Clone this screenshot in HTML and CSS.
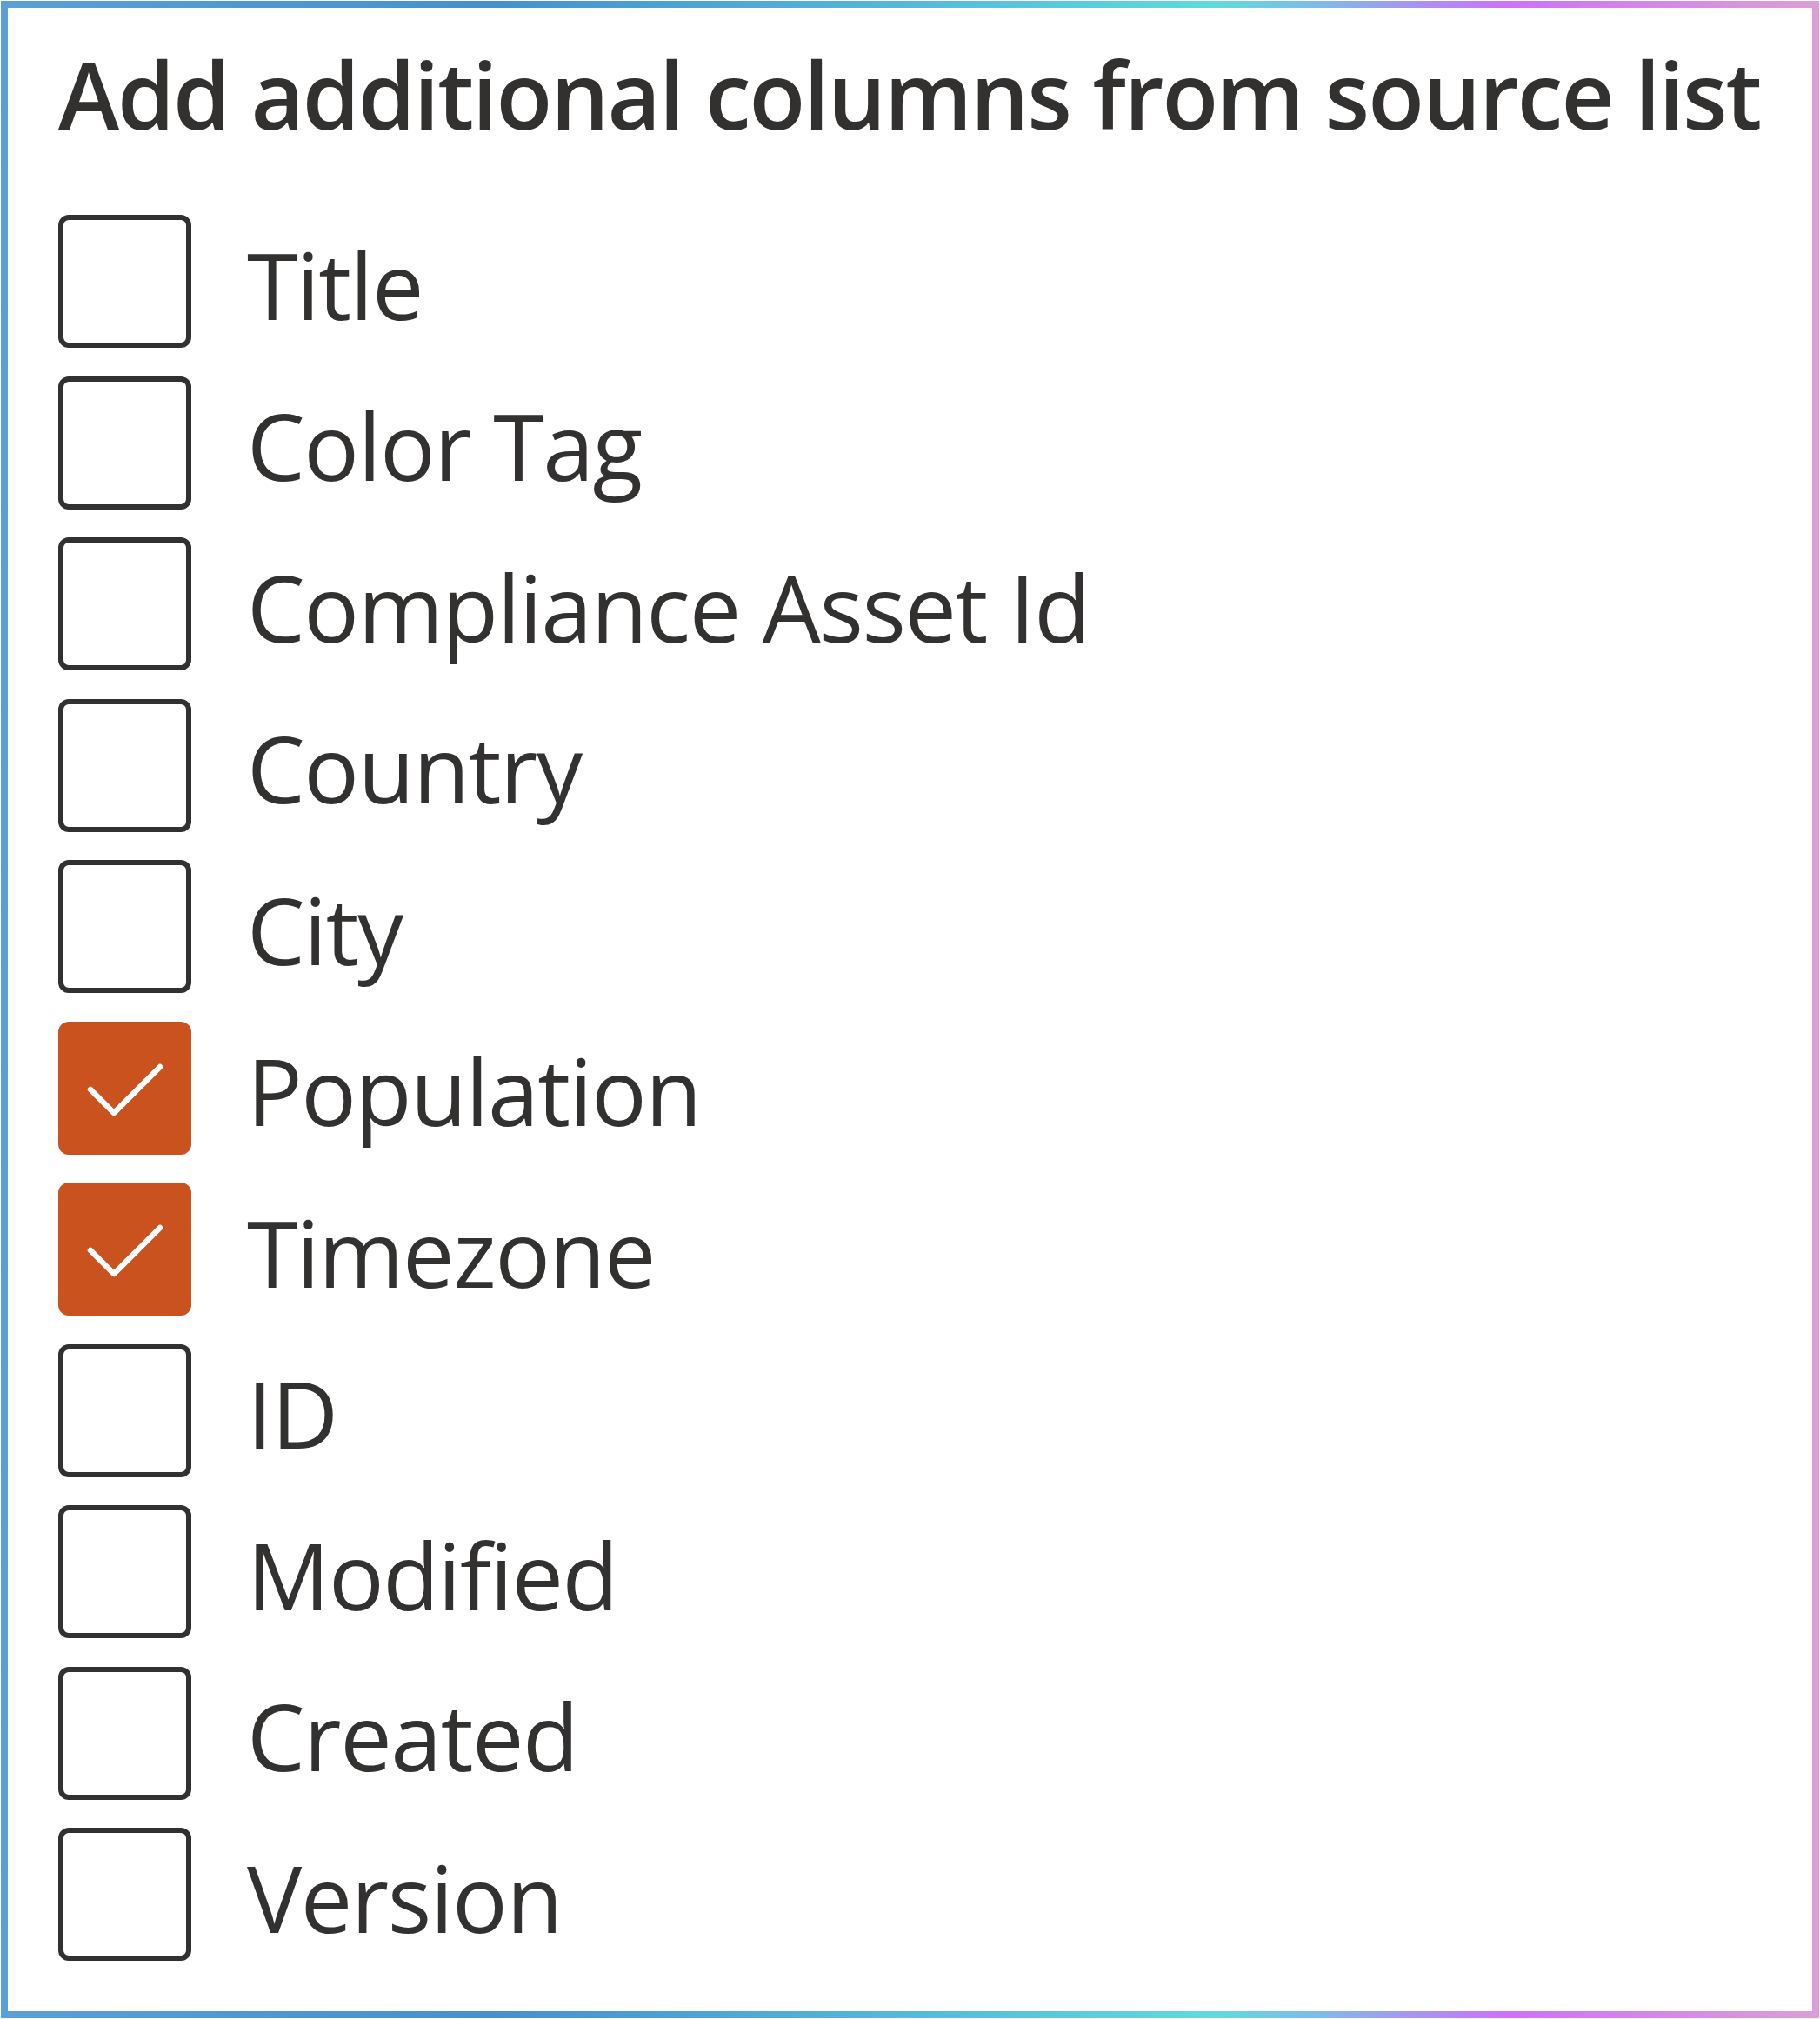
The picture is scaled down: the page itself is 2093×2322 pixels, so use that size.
FILE: index.html
```html
<!DOCTYPE html>
<html lang="en">
<head>
<meta charset="utf-8">
<title>Add additional columns from source list</title>
<link rel="stylesheet" href="styles.css">
</head>
<body>
<div class="panel">
  <h1 class="heading">Add additional columns from source list</h1>
  <ul class="list">
    <li class="row"><span class="box"></span><span class="label">Title</span></li>
    <li class="row"><span class="box"></span><span class="label">Color Tag</span></li>
    <li class="row"><span class="box"></span><span class="label">Compliance Asset Id</span></li>
    <li class="row"><span class="box"></span><span class="label">Country</span></li>
    <li class="row"><span class="box"></span><span class="label">City</span></li>
    <li class="row"><span class="box checked"><svg class="check" viewBox="0 0 153 153"><polyline points="37,78 64,105 117,52"/></svg></span><span class="label">Population</span></li>
    <li class="row"><span class="box checked"><svg class="check" viewBox="0 0 153 153"><polyline points="37,78 64,105 117,52"/></svg></span><span class="label">Timezone</span></li>
    <li class="row"><span class="box"></span><span class="label">ID</span></li>
    <li class="row"><span class="box"></span><span class="label">Modified</span></li>
    <li class="row"><span class="box"></span><span class="label">Created</span></li>
    <li class="row"><span class="box"></span><span class="label">Version</span></li>
  </ul>
</div>
</body>
</html>
```
FILE: styles.css
```css
html, body {
  margin: 0;
  padding: 0;
  background: #ffffff;
}

.panel {
  box-sizing: border-box;
  width: 2091px;
  height: 2320px;
  margin: 1px;
  border: 8px solid #5b9fd6;
  border-image: linear-gradient(90deg, #5b9fd6 0%, #4690d0 27%, #52b0d8 45%, #62d9de 67%, #82b8e8 73%, #cc72f8 83%, #dc9ed6 100%) 1;
  padding: 34px 0 0 58px;
  font-family: "Open Sans", "Noto Sans", "Liberation Sans", sans-serif;
  color: #323130;
}

.heading {
  margin: 0;
  font-size: 106px;
  line-height: 130px;
  font-weight: 600;
  letter-spacing: -2.05px;
  white-space: nowrap;
}

.list {
  list-style: none;
  margin: 74px 0 0 0;
  padding: 0;
  display: flex;
  flex-direction: column;
  gap: 32.5px;
}

.row {
  display: flex;
  align-items: center;
  gap: 64px;
  height: 153px;
}

.box {
  box-sizing: border-box;
  flex: none;
  width: 153px;
  height: 153px;
  border: 6px solid #323130;
  border-radius: 12px;
  display: block;
  position: relative;
}

.box.checked {
  background: #c9521f;
  border-color: #c9521f;
}

.check {
  position: absolute;
  left: -6px;
  top: -6px;
  width: 153px;
  height: 153px;
}

.check polyline {
  fill: none;
  stroke: #ffffff;
  stroke-width: 6.5;
  stroke-linecap: round;
  stroke-linejoin: round;
}

.label {
  font-size: 106px;
  line-height: 130px;
  letter-spacing: -1.45px;
  padding-top: 6px;
  white-space: nowrap;
}
```
